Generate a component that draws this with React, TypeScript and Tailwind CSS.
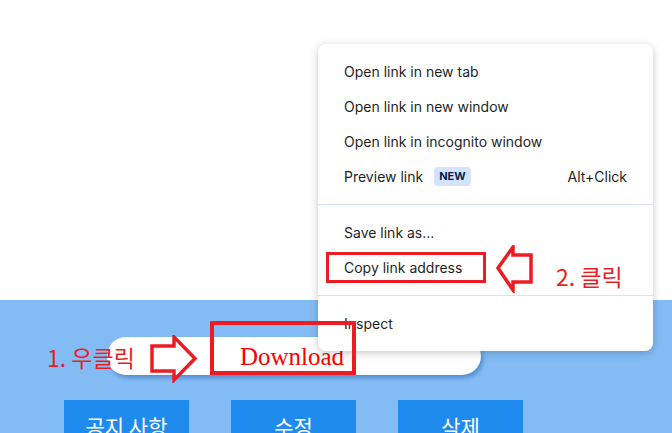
import React from "react";

const menuFont = { fontFamily: "Inter, 'Noto Sans', sans-serif" };
const koFont = { fontFamily: "'Noto Sans CJK KR', 'Noto Sans', sans-serif" };

const MenuItem = ({ label, children }: { label: string; children?: React.ReactNode }) => (
  <div className="flex h-[35px] items-center px-[26px] text-[14px] text-[#1f1f1f]">
    <span>{label}</span>
    {children}
  </div>
);

const Separator = () => (
  <div className="flex h-[21px] items-center">
    <div className="h-px w-full bg-[#d3e3fd]" />
  </div>
);

export default function App() {
  return (
    <div className="relative h-[433px] w-[672px] overflow-hidden bg-white">
      {/* page */}
      <div className="h-[300px] bg-white" />
      <div className="h-[133px] bg-[#83bcf5] pt-[37px]">
        <div className="ml-[107px] flex h-[38px] w-[374px] items-center justify-center rounded-full bg-white shadow-[2px_3px_4px_rgba(30,80,160,0.45)]">
          <span className="ml-[-4px] text-[25px] leading-none text-[#ff0000]" style={{ fontFamily: "'Liberation Serif', serif" }}>
            Download
          </span>
        </div>
        <div className="ml-[64px] mt-[25px] flex gap-[42px]" style={koFont}>
          {["공지 사항", "수정", "삭제"].map((t) => (
            <div key={t} className="flex h-[46px] w-[125px] justify-center bg-[#208bee] pt-[11px] text-[21px] text-white">
              {t}
            </div>
          ))}
        </div>
      </div>

      {/* context menu */}
      <div
        className="absolute left-[318px] top-[44px] w-[335px] rounded-[8px] bg-white py-[10px] shadow-[0_2px_8px_rgba(0,0,0,0.22)]"
        style={menuFont}
      >
        <MenuItem label="Open link in new tab" />
        <MenuItem label="Open link in new window" />
        <MenuItem label="Open link in incognito window" />
        <MenuItem label="Preview link">
          <span className="ml-[11px] rounded-[4px] bg-[#d3e3fd] px-[5px] py-[1px] text-[11px] font-bold text-[#041e49]">NEW</span>
          <span className="ml-auto">Alt+Click</span>
        </MenuItem>
        <Separator />
        <MenuItem label="Save link as..." />
        <MenuItem label="Copy link address" />
        <Separator />
        <MenuItem label="Inspect" />
      </div>

      {/* annotations */}
      <div className="absolute left-[210px] top-[321px] h-[54px] w-[146px] border-[4px] border-[#ed1c24]" />
      <div className="absolute left-[326px] top-[252px] h-[31px] w-[160px] border-[3px] border-[#ed1c24]" />

      <svg className="absolute left-[149px] top-[335px]" width="50" height="48" viewBox="0 0 50 48">
        <polygon points="3,11 25,11 25,2 46,23.5 25,45 25,36 3,36" fill="none" stroke="#ed1c24" strokeWidth="3.5" />
      </svg>
      <svg className="absolute left-[495px] top-[245px]" width="40" height="48" viewBox="0 0 40 48">
        <polygon points="3,23 18,2 18,10 36,10 36,37 18,37 18,45" fill="none" stroke="#ed1c24" strokeWidth="3.5" />
      </svg>

      <div className="absolute left-[47px] top-[346px] text-[23px] leading-none text-[#ed1c24]" style={koFont}>
        1. 우클릭
      </div>
      <div className="absolute left-[556px] top-[265px] text-[23px] leading-none text-[#ed1c24]" style={koFont}>
        2. 클릭
      </div>
    </div>
  );
}
